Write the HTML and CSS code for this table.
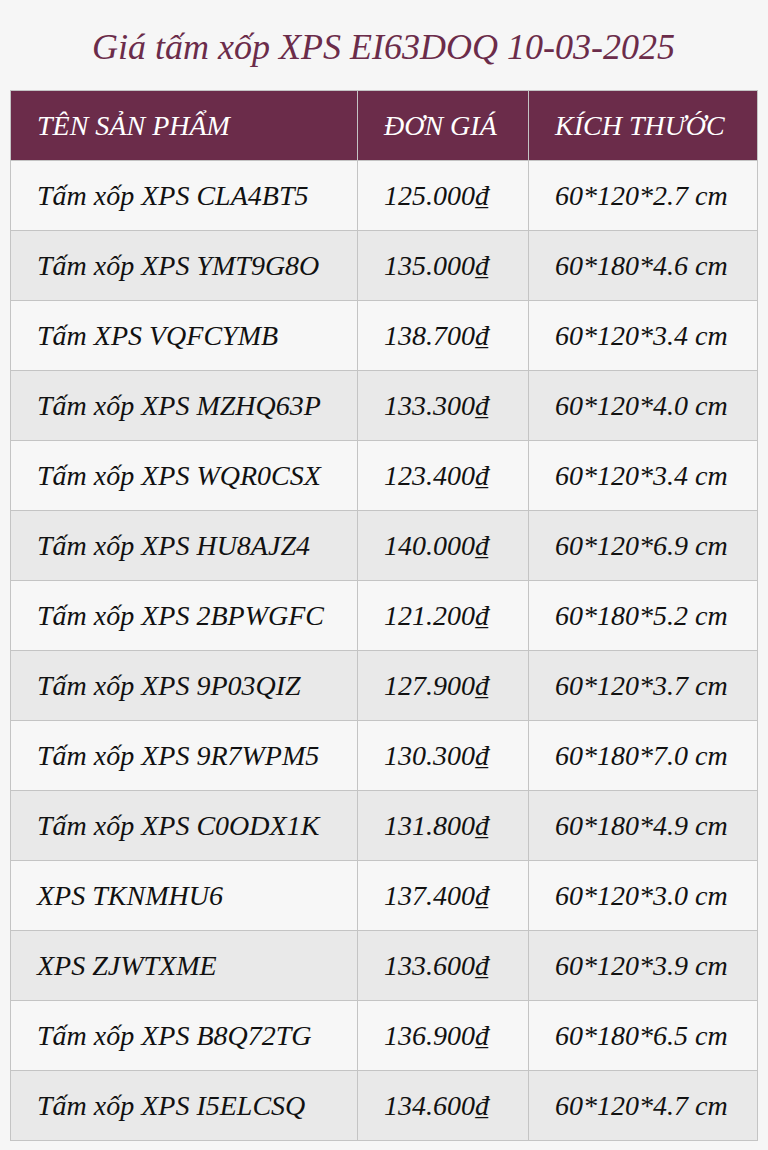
FILE: index.html
```html
<!DOCTYPE html>
<html lang="vi">
<head>
<meta charset="utf-8">
<title>Giá tấm xốp XPS</title>
<link rel="stylesheet" href="styles.css">
</head>
<body>
<div class="page">
  <h1 class="title">Giá tấm xốp XPS EI63DOQ 10-03-2025</h1>
  <table class="price-table">
    <colgroup>
      <col class="c-name"><col class="c-price"><col class="c-size">
    </colgroup>
    <thead>
      <tr><th>TÊN SẢN PHẨM</th><th>ĐƠN GIÁ</th><th>KÍCH THƯỚC</th></tr>
    </thead>
    <tbody>
      <tr><td>Tấm xốp XPS CLA4BT5</td><td>125.000₫</td><td>60*120*2.7 cm</td></tr>
      <tr><td>Tấm xốp XPS YMT9G8O</td><td>135.000₫</td><td>60*180*4.6 cm</td></tr>
      <tr><td>Tấm XPS VQFCYMB</td><td>138.700₫</td><td>60*120*3.4 cm</td></tr>
      <tr><td>Tấm xốp XPS MZHQ63P</td><td>133.300₫</td><td>60*120*4.0 cm</td></tr>
      <tr><td>Tấm xốp XPS WQR0CSX</td><td>123.400₫</td><td>60*120*3.4 cm</td></tr>
      <tr><td>Tấm xốp XPS HU8AJZ4</td><td>140.000₫</td><td>60*120*6.9 cm</td></tr>
      <tr><td>Tấm xốp XPS 2BPWGFC</td><td>121.200₫</td><td>60*180*5.2 cm</td></tr>
      <tr><td>Tấm xốp XPS 9P03QIZ</td><td>127.900₫</td><td>60*120*3.7 cm</td></tr>
      <tr><td>Tấm xốp XPS 9R7WPM5</td><td>130.300₫</td><td>60*180*7.0 cm</td></tr>
      <tr><td>Tấm xốp XPS C0ODX1K</td><td>131.800₫</td><td>60*180*4.9 cm</td></tr>
      <tr><td>XPS TKNMHU6</td><td>137.400₫</td><td>60*120*3.0 cm</td></tr>
      <tr><td>XPS ZJWTXME</td><td>133.600₫</td><td>60*120*3.9 cm</td></tr>
      <tr><td>Tấm xốp XPS B8Q72TG</td><td>136.900₫</td><td>60*180*6.5 cm</td></tr>
      <tr><td>Tấm xốp XPS I5ELCSQ</td><td>134.600₫</td><td>60*120*4.7 cm</td></tr>
    </tbody>
  </table>
</div>
</body>
</html>
```
FILE: styles.css
```css
html, body {
  margin: 0;
  padding: 0;
  background: #f6f6f6;
}
body {
  font-family: "Liberation Serif", "DejaVu Serif", serif;
  font-style: italic;
  color: #111;
}
.page {
  padding: 0 11px 0 10px;
}
.title {
  margin: 0;
  height: 90px;
  line-height: 94px;
  text-align: center;
  font-size: 36px;
  font-weight: normal;
  color: #6b2c4a;
}
.price-table {
  width: 747px;
  border-collapse: collapse;
  table-layout: fixed;
  font-size: 28px;
}
.c-name { width: 347px; }
.c-price { width: 171px; }
.c-size { width: 229px; }
.price-table th,
.price-table td {
  height: 70px;
  padding: 0 0 0 26px;
  border: 1px solid #c4c4c4;
  text-align: left;
  white-space: nowrap;
  box-sizing: border-box;
}
.price-table th {
  background: #6b2c4a;
  color: #fff;
  font-weight: normal;
  font-size: 28px;
}
.price-table tbody tr:nth-child(odd) td { background: #f7f7f7; }
.price-table tbody tr:nth-child(even) td { background: #e9e9e9; }
```
